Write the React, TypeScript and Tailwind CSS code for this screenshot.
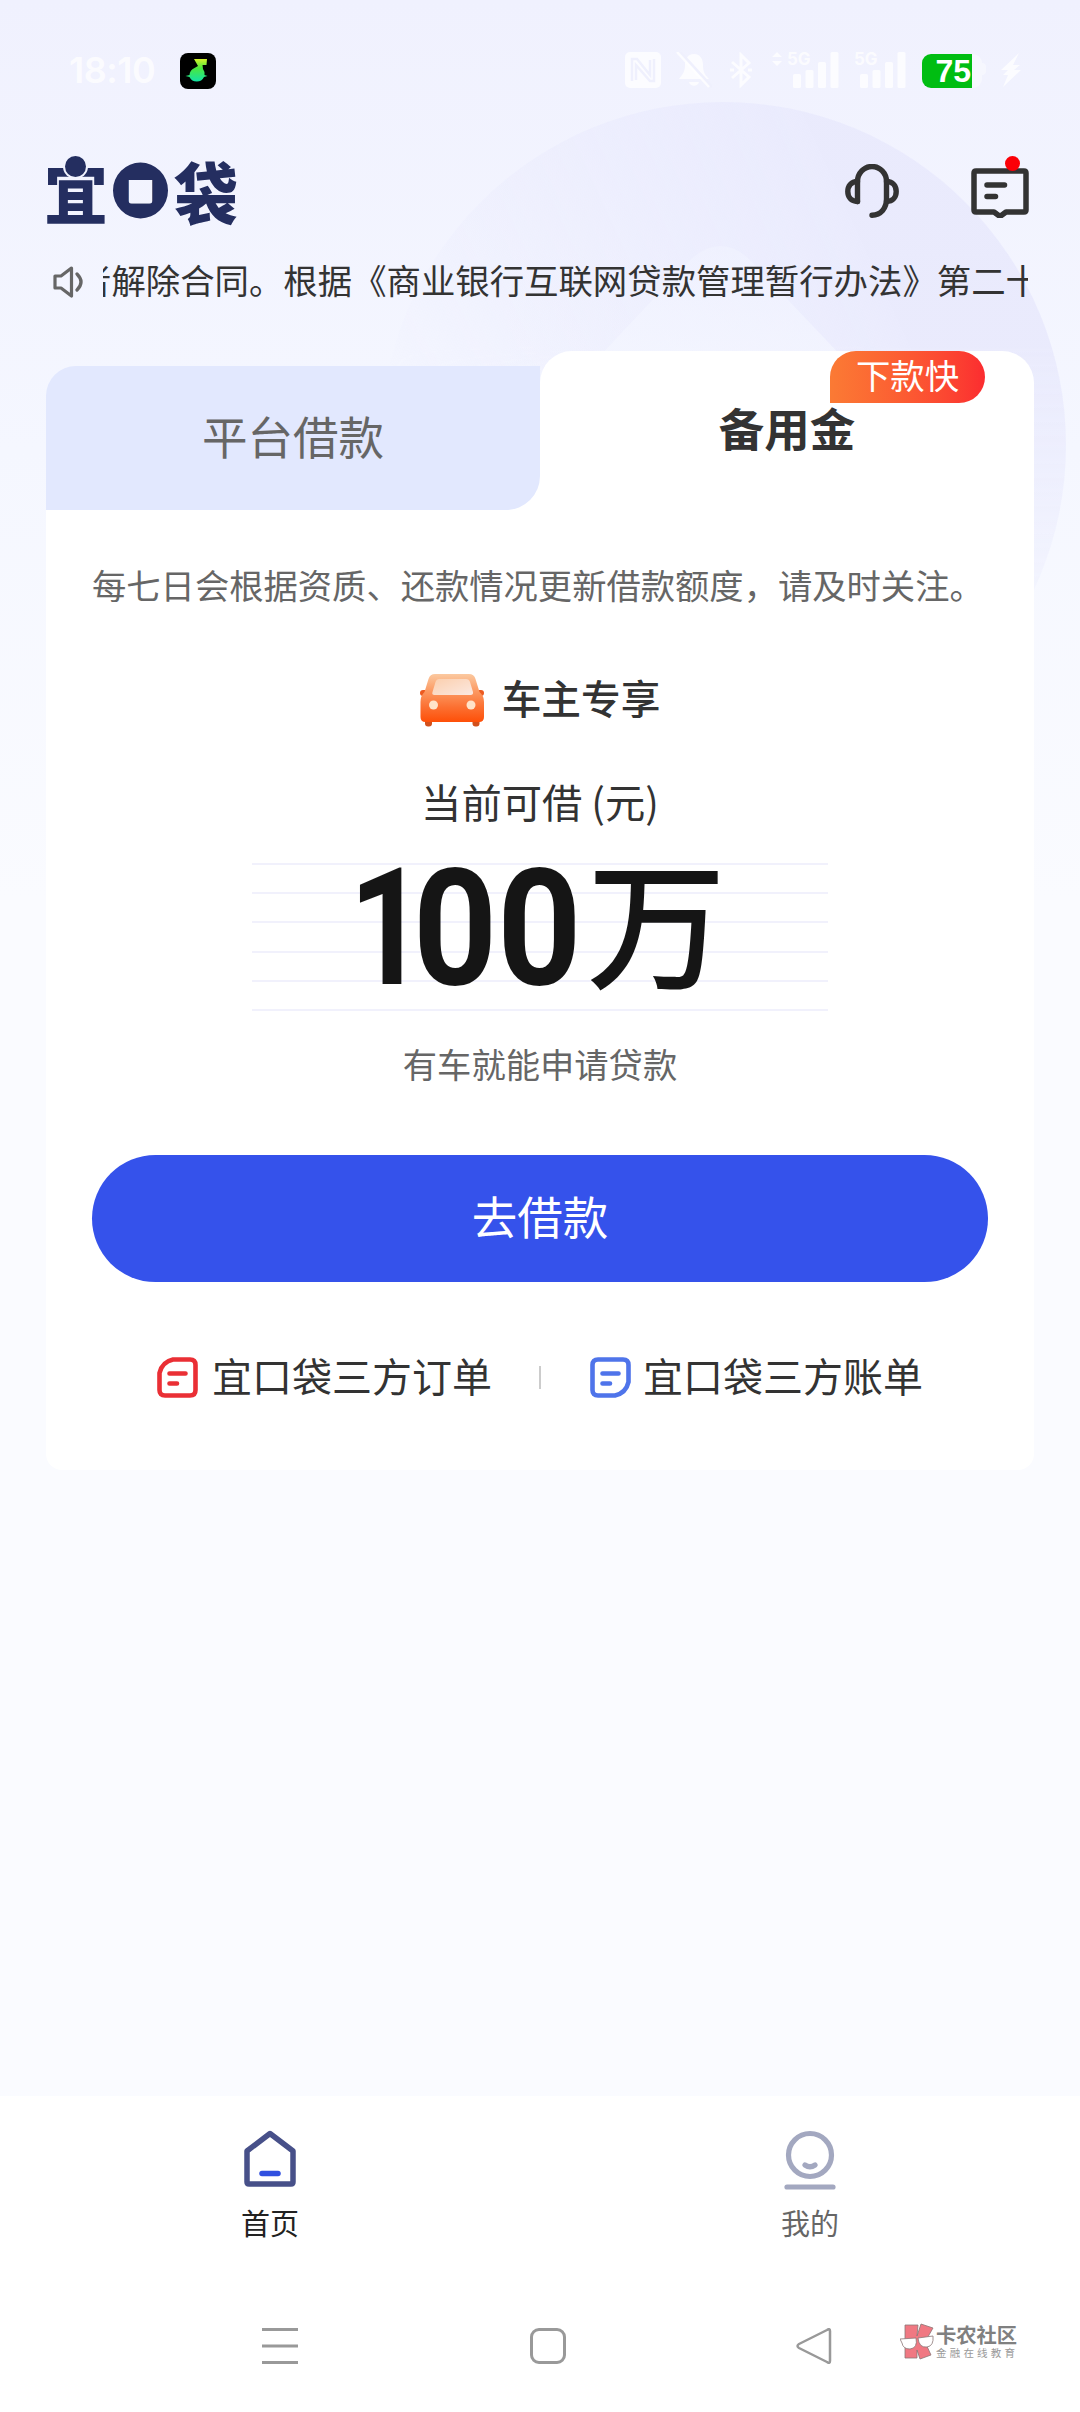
import type React from "react";

const cjk = "font-['Noto_Sans_CJK_SC',sans-serif]";

function SignalBars() {
  return (
    <svg viewBox="0 0 46 36" className="w-[46px] h-9" fill="currentColor">
      <rect x="0" y="22" width="8" height="14" rx="1.5" />
      <rect x="12.500" y="18" width="8" height="18" rx="1.5" />
      <rect x="25" y="10" width="8" height="26" rx="1.5" />
      <rect x="37.500" y="0" width="8" height="36" rx="1.5" />
    </svg>
  );
}

function StatusBar() {
  return (
    <div className="flex h-[106px] items-end text-white/75">
      <div className="flex w-full h-[54px] items-start">
        <span className="ml-[69px] w-[111px] text-[36px] leading-9 font-semibold font-['Inter',sans-serif] tracking-[-0.5px]">
          18:10
        </span>
        <svg viewBox="0 0 36 36" className="mt-[1px] w-9 h-9">
          <defs>
            <linearGradient id="note" x1="0" y1="0" x2="0" y2="1">
              <stop offset="0" stopColor="#d6f22a" />
              <stop offset="0.4" stopColor="#4be83e" />
              <stop offset="1" stopColor="#12e2a6" />
            </linearGradient>
          </defs>
          <rect width="36" height="36" rx="8" fill="#000" />
          <path
            d="M14 6H27L26.500 12H22.500L23 16Q25 18.500 24.500 22L27.500 23L24 24A8 8 0 0 1 9.500 24L5.500 23L9.500 22A8 8 0 0 1 14.500 15L18 13Z"
            fill="url(#note)"
          />
        </svg>
        <div className="ml-[409px] flex items-start">
          {/* NFC */}
          <svg viewBox="0 0 36 36" className="w-9 h-9">
            <rect width="36" height="36" rx="5" fill="currentColor" />
            <path d="M7 29V7H12L25 23V8" fill="none" stroke="#eff0fd" strokeWidth="2.500" />
            <path d="M11 28V13L25 29H29V7" fill="none" stroke="#eff0fd" strokeWidth="2.500" />
          </svg>
          {/* muted bell */}
          <svg viewBox="0 0 36 36" className="ml-[15px] w-9 h-9">
            <path
              d="M18 2C11 2 9 8 9 13C9 20 6 23 3 27H33C29 23 27 20 27 13C27 8 25 2 18 2ZM13 30H23C22 35 14 35 13 30Z"
              fill="currentColor"
            />
            <path d="M4 0L36 35" stroke="#eff0fd" strokeWidth="3" />
            <path d="M1 0L33 35" stroke="currentColor" strokeWidth="2.500" />
          </svg>
          {/* bluetooth */}
          <svg viewBox="0 0 22 36" className="ml-[18px] w-[22px] h-9" fill="none" stroke="currentColor" strokeWidth="3">
            <path d="M2 10L19 25L11 33V3L19 11L2 26" />
            <path d="M0 18H4M18 18H22" />
          </svg>
          <div className="relative ml-[20px] pl-[21px]">
            <svg viewBox="0 0 10 14" className="absolute left-0 top-0 w-[10px] h-[14px]" fill="currentColor">
              <path d="M5 0L10 5H0ZM5 14L0 9H10Z" />
            </svg>
            <span className="absolute left-[15px] top-[-1px] text-[17px] leading-4 font-bold font-['Inter',sans-serif]">
              5G
            </span>
            <SignalBars />
          </div>
          <div className="relative ml-[21px]">
            <span className="absolute left-[-6px] top-[-1px] text-[17px] leading-4 font-bold font-['Inter',sans-serif]">
              5G
            </span>
            <SignalBars />
          </div>
          <div className="ml-[16px] mt-[2px] flex h-[34px] w-[60px] overflow-hidden rounded-[9px] bg-white/40">
            <div className="w-[50px] bg-[#00bd12] pr-[1px] text-right text-[32px] leading-[35px] font-bold text-white font-['Liberation_Sans',sans-serif]">
              75
            </div>
          </div>
          <div className="mt-[11px] h-3 w-1 rounded-r bg-white/40" />
          <svg viewBox="0 0 22 36" className="ml-[14px] w-[22px] h-9" fill="currentColor">
            <path d="M19 1L1 18H8L3 23H8L3 35L21 18H14L20 13H13Z" />
          </svg>
        </div>
      </div>
    </div>
  );
}

function Logo() {
  return (
    <div className="relative flex h-[69px] w-[192px] items-center text-[#242e60]">
      <span className="-ml-[2px] w-[62px] origin-bottom scale-y-105 text-[64px] leading-[70px] font-black">宜</span>
      <div className="relative ml-[7px] flex h-[57px] w-[56px] items-center justify-center">
        <svg viewBox="0 0 56 57" className="absolute inset-0 w-full h-full">
          <path
            fillRule="evenodd"
            fill="currentColor"
            d="M28 0A28 28.500 0 1 1 28 57A28 28.500 0 1 1 28 0ZM19 15Q16 15 16 18V39Q16 42 19 42H37Q40 42 40 39V18Q40 15 37 15Z"
          />
        </svg>
        <span className="relative -mt-[2px] text-[44px] leading-none font-medium">口</span>
      </div>
      <span className="ml-[6px] w-[64px] origin-bottom scale-y-105 text-[64px] leading-[70px] font-black">袋</span>
      {/* head of the first character */}
      <div className="absolute left-[19px] top-0 h-[21px] w-[21px] rounded-full bg-[#242e60] ring-2 ring-[#f1f3fe]" />
    </div>
  );
}

function HeadsetIcon() {
  return (
    <svg
      viewBox="0 0 54 54"
      className="w-[54px] h-[54px]"
      fill="none"
      stroke="#333"
      strokeWidth="5.400"
      strokeLinecap="round"
      strokeLinejoin="round"
    >
      <path d="M12.500 37.500V17.500A14.500 15 0 0 1 41.500 17.500V35C41.500 44 36 51 27 51.200" />
      <path d="M12.500 17.500C6 17.500 2.800 22 2.800 27.500S6 37.300 12.500 37.500" />
      <path d="M41.500 17.500C48 17.500 51.200 22 51.200 27.500S48 37.500 41.500 37.500" />
    </svg>
  );
}

function MessageIcon() {
  return (
    <svg
      viewBox="0 0 58 62"
      className="w-[58px] h-[62px]"
      fill="none"
      stroke="#333"
      strokeWidth="5.500"
      strokeLinecap="round"
      strokeLinejoin="round"
    >
      <path d="M5 15H53Q55 15 55 17V54Q55 56 53 56H35L29 60.500L23 56H5Q3 56 3 54V17Q3 15 5 15Z" />
      <path d="M16 29H33.500M16 40.500H24.500" />
      <circle cx="41.500" cy="7.500" r="7.500" fill="#fb0007" stroke="none" />
    </svg>
  );
}

function DocIcon({ color, flip }: { color: string; flip?: boolean }) {
  return (
    <svg viewBox="0 0 41 41" className="w-[41px] h-[41px]" fill="none" stroke={color} strokeWidth="4.600" strokeLinecap="round">
      <path
        d={
          flip
            ? "M8 2.500H33Q38.500 2.500 38.500 8V25Q36 36 25 38.500H8Q2.500 38.500 2.500 33V8Q2.500 2.500 8 2.500Z"
            : "M33 38.500H8Q2.500 38.500 2.500 33V16Q5 5 16 2.500H33Q38.500 2.500 38.500 8V33Q38.500 38.500 33 38.500Z"
        }
      />
      <path d="M12.500 16.500H28.500M12.500 26.500H20" />
    </svg>
  );
}

function CarIcon() {
  return (
    <svg viewBox="0 0 64 53" className="w-16 h-[53px]">
      <defs>
        <linearGradient id="car" x1="0" y1="0" x2="0" y2="1">
          <stop offset="0" stopColor="#fbc9a0" />
          <stop offset="0.350" stopColor="#fc9a63" />
          <stop offset="0.700" stopColor="#fc6f30" />
          <stop offset="1" stopColor="#fe4f08" />
        </linearGradient>
        <linearGradient id="glass" x1="0" y1="0" x2="1" y2="1">
          <stop offset="0" stopColor="#fbcfae" />
          <stop offset="1" stopColor="#fbe9e1" />
        </linearGradient>
      </defs>
      <rect x="5" y="42" width="7" height="10.500" rx="3" fill="#d2501c" />
      <rect x="52.500" y="42" width="7" height="10.500" rx="3" fill="#d2501c" />
      <rect x="0" y="16" width="10" height="6" rx="3" fill="#ec5a20" />
      <rect x="54" y="16" width="10" height="6" rx="3" fill="#ec5a20" />
      <path
        d="M15 0H49Q54 0 55.500 5L59.500 18Q64 22 64 28V43Q64 48 59 48H5.500Q0.500 48 0.500 43V28Q0.500 22 4.500 18L8.500 5Q10 0 15 0Z"
        fill="url(#car)"
      />
      <path d="M19 5H46Q49 5 50 8L53 18Q53.500 21 50.500 21H14.500Q11.500 21 12.500 18L15.500 8Q16.500 5 19 5Z" fill="url(#glass)" />
      <circle cx="13.500" cy="31" r="4.500" fill="#ffe3c8" />
      <circle cx="51" cy="31" r="4.500" fill="#ffe3c8" />
    </svg>
  );
}

function TabItem({
  label,
  className,
  children,
}: {
  label: string;
  className: string;
  children: React.ReactNode;
}) {
  return (
    <div className="flex flex-1 flex-col items-center">
      <div className="flex h-[60px] items-start">{children}</div>
      <span className={`mt-[15px] text-[29px] leading-[34px] ${className}`}>{label}</span>
    </div>
  );
}

export default function App() {
  return (
    <div
      className={`relative flex h-[2412px] w-[1080px] flex-col overflow-hidden bg-[#fafbff] ${cjk}`}
    >
      {/* Header backdrop */}
      <div className="absolute inset-x-0 top-0 h-[897px] bg-linear-to-b from-[#f0f1fe] via-[#f5f7ff] to-[#fafbff]">
        <svg viewBox="0 0 1080 897" className="h-full w-full">
          <defs>
            <linearGradient id="disc" x1="0.050" y1="0.500" x2="0.700" y2="0.200">
              <stop offset="0" stopColor="#e9eafd" stopOpacity="0" />
              <stop offset="1" stopColor="#e9eafd" stopOpacity="0.900" />
            </linearGradient>
            <linearGradient id="discFade" x1="0" y1="0" x2="0" y2="1">
              <stop offset="0" stopColor="#fff" />
              <stop offset="0.350" stopColor="#fff" />
              <stop offset="0.850" stopColor="#000" />
            </linearGradient>
            <linearGradient id="peak" x1="0" y1="0" x2="0" y2="1">
              <stop offset="0" stopColor="#f2f4ff" stopOpacity="0.500" />
              <stop offset="1" stopColor="#f5f7ff" stopOpacity="0.900" />
            </linearGradient>
            <mask id="fade">
              <rect x="370" y="100" width="710" height="700" fill="url(#discFade)" />
            </mask>
          </defs>
          <circle cx="723" cy="445" r="343" fill="url(#disc)" mask="url(#fade)" />
          <path d="M540 420L688 262Q721 230 752 262L902 420Z" fill="url(#peak)" />
        </svg>
      </div>

      <div className="relative flex flex-1 flex-col">
        <StatusBar />

        <header className="mt-[50px] flex h-[69px] items-start justify-between pl-[46px] pr-[51px]">
          <Logo />
          <div className="flex items-start gap-[72px]">
            <div className="pt-[8px]">
              <HeadsetIcon />
            </div>
            <MessageIcon />
          </div>
        </header>

        {/* Scrolling notice */}
        <div className="mt-[31px] flex h-[52px] items-center pl-[53px] pr-[52px]">
          <svg
            viewBox="0 0 30 32"
            className="w-[30px] h-8 shrink-0"
            fill="none"
            stroke="#666"
            strokeWidth="3.200"
            strokeLinejoin="round"
            strokeLinecap="round"
          >
            <path d="M2 10V22H8L18.500 30V2L8 10Z" />
            <path d="M24 8Q32 16 24 24" />
          </svg>
          <div className="-mt-[6px] ml-5 flex flex-1 overflow-hidden">
            <p className="-ml-[26px] whitespace-nowrap text-[34.400px] leading-[52px] text-[#333]">
              者解除合同。根据《商业银行互联网贷款管理暂行办法》第二十
            </p>
          </div>
        </div>

        {/* Loan card */}
        <section className="mx-[46px] mt-[43px] flex h-[1119px] flex-col">
          <div className="flex h-[159px] items-end">
            <div className="h-[144px] flex-1 bg-linear-to-r from-transparent from-50% to-white to-50%">
              <div className="flex h-full items-center justify-center rounded-tl-[30px] rounded-br-[34px] bg-[#e2e8fe] pb-[6px] text-[45.500px] text-[#666]">
                平台借款
              </div>
            </div>
            <div className="h-full flex-1">
              <div className="relative flex h-full justify-center rounded-t-[32px] bg-white pt-[42px] text-[45.500px] leading-[68px] font-bold text-[#333]">
                备用金
                <span className="absolute right-[49px] top-0 flex h-[52px] w-[155px] items-center justify-center rounded-[26px] rounded-bl-none bg-linear-to-r from-[#fb7a34] to-[#fb2c30] pb-[5px] text-[34.400px] leading-[47px] font-normal text-white">
                  下款快
                </span>
              </div>
            </div>
          </div>

          <div className="flex flex-1 flex-col items-center rounded-b-[16px] bg-white px-[46px]">
            <p className="mt-[48px] self-start whitespace-nowrap text-[34.300px] leading-[52px] text-[#666]">
              每七日会根据资质、还款情况更新借款额度，请及时关注。
            </p>

            <div className="mt-[60px] flex h-[60px] items-center gap-[18px]">
              <CarIcon />
              <span className="-mt-[6px] text-[39.700px] leading-[60px] font-medium text-[#333]">车主专享</span>
            </div>

            <p className="mt-[41px] text-[40.300px] leading-[60px] text-[#333]">当前可借 (元)</p>

            {/* Amount over ruled lines */}
            <div className="relative mt-[32px] flex h-[148px] w-[576px] flex-col justify-between">
              <div className="h-[2px] bg-[#f1f1fc]" />
              <div className="h-[2px] bg-[#f1f1fc]" />
              <div className="h-[2px] bg-[#f1f1fc]" />
              <div className="h-[2px] bg-[#f1f1fc]" />
              <div className="h-[2px] bg-[#f1f1fc]" />
              <div className="h-[2px] bg-[#f1f1fc]" />
              <div className="absolute left-[97px] top-0 flex items-start text-[#151515]">
                <span className="mt-[4px] flex w-[238px] text-[163px] leading-[124px] font-bold font-['Roboto',sans-serif]">
                  <span className="w-[64px] shrink-0 origin-left scale-x-[.82] tracking-[-18px]">1</span>
                  <span className="shrink-0 origin-left scale-x-90">00</span>
                </span>
                <span className="-mt-[9px] text-[139px] leading-[128px] font-medium">万</span>
              </div>
            </div>

            <p className="mt-[26px] text-[34.300px] leading-[52px] text-[#666]">有车就能申请贷款</p>

            <button className="mt-[66px] h-[127px] w-full shrink-0 rounded-full bg-[#3552eb] pb-[6px] text-[45.500px] leading-[121px] text-white">
              去借款
            </button>

            <div className="mt-[66px] flex h-[58px] w-full items-center pl-[65px]">
              <DocIcon color="#ea2f35" />
              <span className="-mt-[5px] ml-[14px] text-[40px] leading-[58px] text-[#333]">宜口袋三方订单</span>
              <div className="ml-[47px] h-[23px] w-[2px] bg-[#ccc]" />
              <div className="ml-[49px]">
                <DocIcon color="#4f74ea" flip />
              </div>
              <span className="-mt-[5px] ml-[12px] text-[40px] leading-[58px] text-[#333]">宜口袋三方账单</span>
            </div>
          </div>
        </section>
      </div>

      {/* Bottom tabs */}
      <nav className="relative flex h-[190px] bg-white pt-[34px]">
        <TabItem label="首页" className="text-[#222]">
          <svg
            viewBox="0 0 54 58"
            className="w-[54px] h-[58px]"
            fill="none"
            stroke="#475089"
            strokeWidth="5.500"
            strokeLinejoin="round"
            strokeLinecap="round"
          >
            <path d="M4 21L27 3.500L50 21V52Q50 54 48 54H6Q4 54 4 52Z" />
            <path d="M19 43.500H35" stroke="#3150e0" />
          </svg>
        </TabItem>
        <TabItem label="我的" className="text-[#666]">
          <svg
            viewBox="0 0 54 60"
            className="w-[54px] h-[60px]"
            fill="none"
            stroke="#a3a8c0"
            strokeWidth="5.200"
            strokeLinecap="round"
          >
            <circle cx="27" cy="25" r="21.500" />
            <path d="M22 35Q27 38.500 32 35" />
            <path d="M4 57H50" />
          </svg>
        </TabItem>
      </nav>

      {/* System navigation */}
      <div className="relative flex h-[126px] items-start bg-white pt-[42px]">
        <svg viewBox="0 0 36 36" className="ml-[262px] w-9 h-9" stroke="#999" strokeWidth="3">
          <path d="M0 1.500H36M0 18H36M0 34.500H36" />
        </svg>
        <svg viewBox="0 0 36 36" className="ml-[232px] w-9 h-9" fill="none" stroke="#999" strokeWidth="3">
          <rect x="1.500" y="1.500" width="33" height="33" rx="7.500" />
        </svg>
        <svg viewBox="0 0 36 36" className="ml-[230px] w-9 h-9" fill="none" stroke="#999" strokeWidth="2.500" strokeLinejoin="round">
          <path d="M31 2Q34 0 34 3V33Q34 36 31 34L3 20Q0 18 3 16Z" />
        </svg>
        <div className="-mt-[5px] ml-[68px] flex">
          <svg viewBox="0 0 34 38" className="w-[34px] h-[38px]" stroke="#8c7676" strokeWidth="0.800">
            <path d="M5 2H18L17 13L21 1L33 5L25 19L31 32L20 36L17 27V35H5Z" fill="#f07882" />
            <path d="M0 16L16 15Q18 25 10 26Q3 26 2 20Z" fill="#fff" />
            <path d="M18 15L33 13Q34 23 27 24Q19 25 18 15Z" fill="#fff" />
          </svg>
          <div className="ml-[2px] flex flex-col whitespace-nowrap">
            <span className="text-[20.300px] leading-[23px] font-bold text-[#808080]">卡农社区</span>
            <span className="text-[10.500px] leading-[14px] tracking-[3.200px] text-[#999]">金融在线教育</span>
          </div>
        </div>
      </div>
    </div>
  );
}
